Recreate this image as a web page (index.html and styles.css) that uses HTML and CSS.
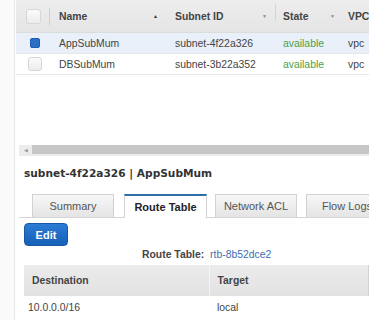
FILE: index.html
```html
<!DOCTYPE html>
<html>
    <head>
        <link rel="stylesheet" href="styles.css">
    </head>
    <body>
        <div class="side"></div>
        <div class="panel">
            <div class="grid">
                <div class="grid-row head">
                    <div class="cell check"><span class="box"></span></div>
                    <div class="cell name sep">Name <span class="caret">&#9650;</span></div>
                    <div class="cell subnet">Subnet ID <span class="caret">&#9660;</span></div>
                    <div class="cell state sep">State <span class="caret">&#9660;</span></div>
                    <div class="cell vpc">VPC</div>
                </div>
                <div class="grid-row selected">
                    <div class="cell check"><span class="box on"></span></div>
                    <div class="cell name">AppSubMum</div>
                    <div class="cell subnet">subnet-4f22a326</div>
                    <div class="cell state ok">available</div>
                    <div class="cell vpc">vpc</div>
                </div>
                <div class="grid-row">
                    <div class="cell check"><span class="box"></span></div>
                    <div class="cell name">DBSubMum</div>
                    <div class="cell subnet">subnet-3b22a352</div>
                    <div class="cell state ok">available</div>
                    <div class="cell vpc">vpc</div>
                </div>
            </div>

            <div class="scrollbar">
                <div class="arrow">&#9664;</div>
                <div class="thumb"></div>
            </div>

            <div class="detail">
                <div class="title">subnet-4f22a326 | AppSubMum</div>

                <div class="tabs">
                    <div class="tab">Summary</div>
                    <div class="tab active">Route Table</div>
                    <div class="tab">Network ACL</div>
                    <div class="tab">Flow Logs</div>
                </div>

                <button class="edit">Edit</button>

                <div class="route">
                    <span class="label">Route Table:</span>
                    <a class="link">rtb-8b52dce2</a>
                </div>

                <table class="routes">
                    <tr>
                        <th class="dest">Destination</th>
                        <th>Target</th>
                    </tr>
                    <tr>
                        <td>10.0.0.0/16</td>
                        <td class="target">local</td>
                    </tr>
                </table>
            </div>
        </div>
    </body>
</html>
```

FILE: styles.css
```css
* {
    box-sizing: border-box;
}
body {
    margin: 0;
    display: flex;
    width: 369px;
    height: 320px;
    overflow: hidden;
    background-color: white;
    font-family: "Liberation Sans", Arial, sans-serif;
    font-size: 10.4px;
    color: #444;
}
.side {
    width: 15px;
    flex-shrink: 0;
    background-color: #fafafa;
    border-right: 1px solid #e6e6e6;
}
.panel {
    flex: 1;
    min-width: 0;
    overflow: hidden;
}

/* subnet list */
.grid {
    margin-left: 1px;
    width: 420px;
}
.grid-row {
    display: grid;
    grid-template-columns: 34px 116px 109px 68px 93px;
    height: 21px;
    align-items: center;
    border-bottom: 1px solid #e8e8e8;
}
.grid-row.head {
    height: 33px;
    background: linear-gradient(#ededed, #e5e5e5);
    border-bottom: 1px solid #dcdcdc;
    font-weight: bold;
    color: #444;
}
.grid-row.selected {
    background-color: #e9f0fa;
}
.cell {
    position: relative;
    padding-left: 9px;
    white-space: nowrap;
}
.cell.check {
    padding-left: 12px;
    display: flex;
    align-items: center;
}
.head .cell.check {
    padding-left: 10px;
    height: 17px;
    border-right: 1px solid #d0d0d0;
}
.grid-row .cell.state {
    padding-left: 8px;
}
.grid-row .cell.vpc {
    padding-left: 5px;
}
.head .sep::before {
    content: "";
    position: absolute;
    left: 0;
    top: -7px;
    height: 17px;
    border-left: 1px solid #d4d4d4;
}
.head .name::before {
    display: none;
}
.caret {
    position: absolute;
    right: 8px;
    top: 2px;
    font-size: 5px;
    color: #888;
}
.name .caret {
    color: #333;
}
.box {
    display: inline-block;
    width: 14px;
    height: 14px;
    border: 1px solid #d6d6d6;
    border-radius: 3px;
    background: linear-gradient(#fbfbfb, #ececec);
}
.head .box {
    width: 15px;
    height: 15px;
}
.box.on {
    width: 10px;
    height: 10px;
    margin-left: 2px;
    border: 1px solid #1d5fb0;
    border-radius: 2px;
    background: #2a6fc4;
}
.ok {
    color: #4aa04a;
}

/* horizontal scrollbar */
.scrollbar {
    display: flex;
    margin: 70px 0 0 4px;
    height: 11px;
    border-bottom: 2px solid #ebebeb;
    background-color: #c6c6c6;
}
.arrow {
    width: 13px;
    background-color: #ececec;
    color: #999;
    font-size: 5px;
    line-height: 10px;
    padding-left: 5px;
}
.thumb {
    flex: 1;
}

/* details */
.detail {
    padding-left: 9px;
}
.title {
    margin-top: 8px;
    font-family: "DejaVu Sans", sans-serif;
    font-weight: bold;
    font-size: 10.6px;
    line-height: 18px;
    color: #333;
}
.tabs {
    display: flex;
    margin: 12px 0 0 -5px;
    padding-left: 13px;
    border-bottom: 1px solid #d6d6d6;
    height: 24px;
    align-items: flex-end;
    width: 380px;
}
.tab {
    width: 82px;
    height: 23px;
    margin-right: 9px;
    border: 1px solid #d2d2d2;
    border-bottom: none;
    background: linear-gradient(#f7f7f7, #e4e4e4);
    text-align: center;
    line-height: 22px;
    font-size: 11px;
    color: #555;
}
.tab.active {
    width: 83px;
    height: 24px;
    margin-bottom: -1px;
    border-top: 2px solid #2e6ea8;
    background: white;
    color: #222;
    font-weight: bold;
}
.tab:first-child {
    margin-right: 10px;
}
.tab.active {
    margin-right: 8px;
}
.edit {
    display: block;
    margin: 5px 0 0 0;
    width: 44px;
    height: 23px;
    border: 1px solid #1a58a6;
    border-radius: 4px;
    background: linear-gradient(#2c7bd4, #1560b9);
    color: white;
    font-family: "Liberation Sans", Arial, sans-serif;
    font-weight: bold;
    font-size: 11px;
    padding: 0;
}
.route {
    margin: 1px 0 0 118px;
    line-height: 16px;
}
.label {
    font-weight: bold;
    color: #444;
    margin-right: 3px;
}
.link {
    color: #3b6eae;
}
.routes {
    margin-top: 2px;
    border-collapse: collapse;
    width: 345px;
    font-size: 10.4px;
}
.routes th {
    height: 31px;
    text-align: left;
    padding-left: 8px;
    background: linear-gradient(#ebebeb, #e2e2e2);
    color: #444;
    border-right: 1px solid #d2d2d2;
}
.routes th.dest {
    width: 185px;
    border-right: 1px solid #f4f4f4;
}
.routes td {
    height: 24px;
    padding-left: 4px;
    color: #444;
    border-bottom: 1px solid #e0e0e0;
}
.routes td.target {
    padding-left: 8px;
}
```
